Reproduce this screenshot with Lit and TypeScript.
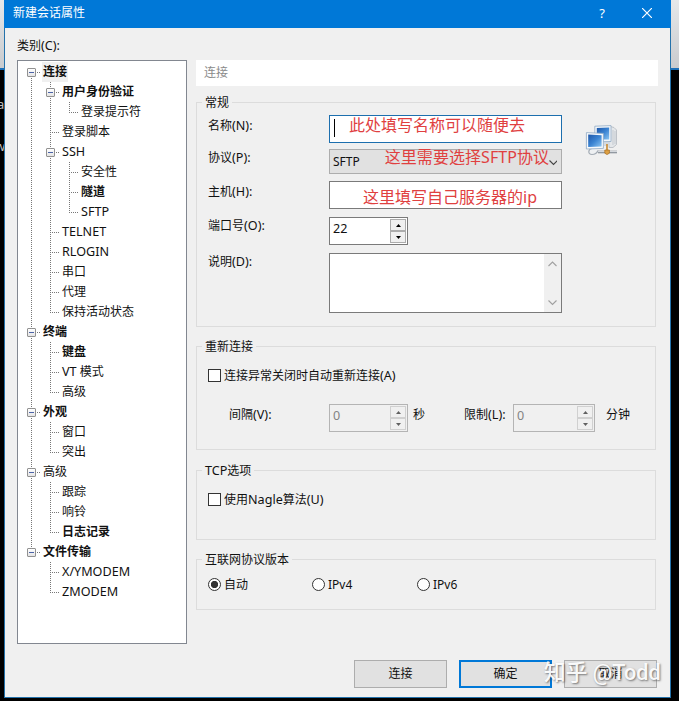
import { LitElement, html, css, svg, nothing } from "lit";
import { customElement, property } from "lit/decorators.js";
import { classMap } from "lit/directives/class-map.js";

interface TreeNode {
  label: string;
  bold?: boolean;
  selected?: boolean;
  children?: TreeNode[];
}

const CATEGORIES: TreeNode[] = [
  {
    label: "连接", bold: true, selected: true, children: [
      { label: "用户身份验证", bold: true, children: [{ label: "登录提示符" }] },
      { label: "登录脚本" },
      { label: "SSH", children: [{ label: "安全性" }, { label: "隧道", bold: true }, { label: "SFTP" }] },
      { label: "TELNET" },
      { label: "RLOGIN" },
      { label: "串口" },
      { label: "代理" },
      { label: "保持活动状态" },
    ],
  },
  { label: "终端", bold: true, children: [{ label: "键盘", bold: true }, { label: "VT 模式" }, { label: "高级" }] },
  { label: "外观", bold: true, children: [{ label: "窗口" }, { label: "突出" }] },
  { label: "高级", children: [{ label: "跟踪" }, { label: "响铃" }, { label: "日志记录", bold: true }] },
  { label: "文件传输", bold: true, children: [{ label: "X/YMODEM" }, { label: "ZMODEM" }] },
];

const base = css`
  * { box-sizing: border-box; }
  .latin { font-size: 12.6px; }
`;

/* Latin runs are set slightly larger than the 12px Chinese glyphs. */
const mix = (text: string) =>
  text.split(/([\x21-\x7e]+)/).map((part) => (/^[\x21-\x7e]/.test(part) ? html`<span class="latin">${part}</span>` : part));

@customElement("category-tree")
export class CategoryTree extends LitElement {
  static styles = [base, css`
    :host { display: block; width: 170px; height: 584px; border: 1px solid #828790; background: #fff; padding: 1px 0 0 4px; }
    .row { display: flex; height: 20px; line-height: 20px; white-space: pre; }
    .cell { width: 19px; flex: none; display: grid; grid-template: 10px 10px / 9px 10px; }
    .v { width: 1px; grid-column: 2; background: repeating-linear-gradient(#777 0 1px, transparent 1px 2px); }
    .top { grid-row: 1; }
    .bottom { grid-row: 2; }
    .h { grid-column: 2; grid-row: 2; height: 1px; background: repeating-linear-gradient(90deg, #777 0 1px, transparent 1px 2px); }
    .box { grid-area: 1 / 1 / 3 / 3; width: 9px; height: 9px; margin: 6px 0 0 5px; border: 1px solid #919191; border-radius: 1px; background: linear-gradient(#4b63a7, #4b63a7) center / 5px 1px no-repeat, linear-gradient(#fff, #e4e4e4); z-index: 1; }
    .label { padding: 0 1px 0 1px; margin-left: 1px; height: 20px; line-height: 20px; }
    .bold { font-weight: 700; }
    .selected { background: #f0f0f0; }
  `];

  private rows(nodes: TreeNode[], trail: boolean[] = []): unknown[] {
    return nodes.map((n, i) => {
      const last = i === nodes.length - 1;
      const first = trail.length === 0 && i === 0;
      return html`
        <div class="row">
          ${trail.map((more) => html`<span class="cell">${more ? html`<i class="v top"></i><i class="v bottom"></i>` : nothing}</span>`)}
          <span class="cell">
            ${first ? nothing : html`<i class="v top"></i>`}
            ${last ? nothing : html`<i class="v bottom"></i>`}
            <i class="h"></i>
            ${n.children ? html`<i class="box"></i>` : nothing}
          </span>
          <span class=${classMap({ label: true, bold: !!n.bold, selected: !!n.selected })}>${mix(n.label)}</span>
        </div>
        ${n.children ? this.rows(n.children, [...trail, !last]) : nothing}`;
    });
  }

  render() { return this.rows(CATEGORIES); }
}

@customElement("group-box")
export class GroupBox extends LitElement {
  @property() heading = "";
  static styles = [base, css`
    :host { display: block; box-sizing: border-box; border: 1px solid #dcdcdc; width: 460px; }
    .heading { display: block; width: max-content; height: 16px; line-height: 16px; margin: -8px 0 0 5px; padding: 0 3px; background: #f0f0f0; }
  `];
  render() { return html`<span class="heading">${mix(this.heading)}</span><slot></slot>`; }
}

@customElement("number-spinner")
export class NumberSpinner extends LitElement {
  @property() value = "";
  @property({ type: Boolean, reflect: true }) disabled = false;
  static styles = [base, css`
    :host { display: flex; box-sizing: border-box; width: 79px; height: 28px; border: 1px solid #7a7a7a; background: #fff; padding: 1px 1px 1px 3px; }
    :host([disabled]) { border-color: #b4b4b4; background: #f0f0f0; color: #838383; }
    .value { flex: 1; line-height: 20px; font-size: 12.6px; }
    .buttons { width: 16px; display: flex; flex-direction: column; }
    .button { flex: 1; border: 1px solid #acacac; background: #f0f0f0; display: grid; place-items: center; }
    :host([disabled]) .button { border-color: #d0d0d0; }
    svg { display: block; fill: #000; }
    :host([disabled]) svg { fill: #606060; }
  `];
  render() {
    return html`<span class="value">${this.value}</span>
      <span class="buttons">
        <span class="button"><svg width="5" height="3"><path d="M0 3 2.5 0 5 3Z"/></svg></span>
        <span class="button"><svg width="5" height="3"><path d="M0 0H5L2.5 3Z"/></svg></span>
      </span>`;
  }
}

const chevron = (d: string, color: string, w = 9, h = 6) =>
  html`<svg width=${w} height=${h} fill="none" stroke=${color} stroke-width="1.1">${svg`<path d=${d}/>`}</svg>`;

const networkIcon = html`
  <svg class="network" width="34" height="34" viewBox="0 0 34 34">
    <defs>
      <linearGradient id="screen" x1="0" y1="0" x2="1" y2="1">
        <stop offset="0" stop-color="#1f57a8"/><stop offset=".5" stop-color="#3a83d2"/><stop offset="1" stop-color="#8cc6f2"/>
      </linearGradient>
    </defs>
    <path d="M26.5 2.5 30 3.5 32.5 6V20.5L29 23.5H25Z" fill="#e4e7ea" stroke="#b3b8be" stroke-width=".8"/>
    <path d="M29 6V21M31 7V20" stroke="#b9bfc6" stroke-width=".7"/>
    <path d="M20 18H26V22H20Z" fill="#d5dadf"/>
    <path d="M10.8 2.2 27 1.6V17.5L10.8 17.8Z" fill="#f2f6fa" stroke="#8fa9c4" stroke-width=".8"/>
    <path d="M12.8 4 25.2 3.6V15.6H12.8Z" fill="url(#screen)"/>
    <path d="M8 24.5C4 25 3.5 30.5 8 30.5 11 30.5 13 29 14 26.5" fill="#eef0f2" stroke="#a4acb5" stroke-width="1.2"/>
    <path d="M2.4 8.6 19.4 9.4V24.4L2.4 25Z" fill="#f7f9fb" stroke="#8fa9c4" stroke-width=".8"/>
    <path d="M4.2 10.6 17.6 11.2V22.6L4.2 23Z" fill="url(#screen)"/>
    <path d="M14 28H33" stroke="#8a929a" stroke-width="2.6"/>
    <path d="M14 27.6H33" stroke="#dde1e5" stroke-width="1"/>
    <path d="M23 20V26" stroke="#c8892e" stroke-width="1.6"/>
    <path d="M20.8 26H25.4V29.2L23 30.6 20.8 29.2Z" fill="#dda043" stroke="#a86d1e" stroke-width=".7"/>
  </svg>`;

@customElement("app-root")
export class AppRoot extends LitElement {
  static styles = [base, css`
    :host { display: block; position: relative; width: 679px; height: 701px; overflow: hidden; box-sizing: border-box; padding-left: 4px;
      background: linear-gradient(#e6e8ea 0, #c9cbce 68px, #1b6fb8 68px, #1b6fb8 70px, #000 70px);
      font: 12px/16px "Noto Sans", "Noto Sans CJK SC", sans-serif; color: #111; }
    .behind { position: absolute; left: -3px; color: #bbb; font-size: 13px; }
    .one { top: 96px; }
    .two { top: 138px; left: -5px; }
    .dialog { position: relative; width: 667px; height: 698px; border: 1px solid #2472ab; border-top: 0; background: #f0f0f0; }
    .titlebar { height: 28px; margin: 0 -1px; background: #0078d7; color: #fff; display: flex; align-items: center; padding: 0 19px 3px 9px; }
    .title { flex: 1; }
    .help { font-size: 13px; margin-right: 37px; }
    .body { display: flex; flex-direction: column; padding: 10px 12px 0; }
    .caption { height: 22px; line-height: 16px; }
    .columns { display: flex; gap: 9px; }
    .panel { width: 462px; }
    .section { height: 26px; background: #fff; color: #8a8a8a; line-height: 25px; padding-left: 8px; }
    .general { height: 225px; margin-top: 16px; }
    .reconnect { height: 104px; margin-top: 19px; }
    .tcp { height: 70px; margin-top: 20px; }
    .ip { height: 51px; margin-top: 19px; }
    .form { display: grid; grid-template-columns: 121px 233px 1fr; grid-template-rows: 34px 32px 36px 36px 60px; padding: 4px 0 0 11px; }
    .lab { grid-column: 1; padding-top: 3px; }
    .lab.up { padding-top: 1px; }
    .field { grid-column: 2; border: 1px solid #7a7a7a; background: #fff; height: 28px; display: flex; }
    .focus { border-color: #1d6fae; }
    .caret { width: 1px; height: 18px; background: #000; margin: 3px 0 0 4px; }
    .note { color: #e0403f; font-size: 16px; line-height: 20px; white-space: nowrap; }
    .note.name { margin-left: 14px; margin-top: -1px; }
    .note.proto { margin-left: 25px; margin-top: -3px; flex: 1; letter-spacing: .05px; }
    .note.host { margin-left: 33px; margin-top: 5px; }
    .combo { height: 25px; background: #e1e1e1; border-color: #adadad; line-height: 23px; padding: 0 4px 0 3px; }
    .combo svg { margin-top: 10px; }
    .area { height: 60px; justify-content: flex-end; }
    .scroll { width: 17px; background: #f0f0f0; display: flex; flex-direction: column; justify-content: space-between; align-items: center; padding: 7px 0 6px; }
    .network { display: block; margin: 9px 0 0 22px; }
    .network-cell { grid-column: 3; grid-row: 1 / 3; }
    .check { display: flex; align-items: center; gap: 3px; height: 16px; padding-left: 11px; }
    .mark { width: 13px; height: 13px; border: 1px solid #333; background: #fff; margin-bottom: 2px; }
    .round { border-radius: 50%; }
    .on { background: radial-gradient(circle, #333 0 3.3px, #fff 4px); }
    .first { margin-top: 13px; }
    .nagle { margin-top: 13px; }
    .timing { display: flex; margin-top: 20px; padding-left: 32px; line-height: 22px; }
    .interval { width: 100px; }
    .seconds { width: 51px; margin-left: 5px; }
    .limit { width: 49px; }
    .wide { width: 82px; }
    .minutes { margin-left: 11px; }
    .radios { display: grid; grid-template-columns: 104px 105px 1fr; margin-top: 9px; }
    .actions { display: flex; justify-content: flex-end; gap: 12px; margin-top: 16px; padding-right: 1px; }
    .btn { width: 93px; height: 28px; border: 1px solid #adadad; background: #e1e1e1; line-height: 26px; text-align: center; }
    .primary { border: 2px solid #0078d7; line-height: 24px; }
    .watermark { position: absolute; left: 539px; top: 659px; font: 500 21.7px/28px Roboto, "Noto Sans CJK SC", sans-serif; white-space: pre; color: rgba(255,255,255,.95); text-shadow: 1px 1px 2px rgba(60,60,60,.65); }
  `];

  render() {
    return html`
      <span class="behind one">a</span><span class="behind two">w</span>
      <div class="dialog">
        <div class="titlebar">
          <span class="title">新建会话属性</span>
          <span class="help">?</span>
          <svg width="10" height="10" stroke="#fff" stroke-width="1.2"><path d="M0 0 10 10M10 0 0 10"/></svg>
        </div>
        <div class="body">
          <div class="caption">${mix("类别(C):")}</div>
          <div class="columns">
            <category-tree></category-tree>
            <div class="panel">
              <div class="section">连接</div>
              <group-box class="general" heading="常规">
                <div class="form">
                  <span class="lab">${mix("名称(N):")}</span>
                  <div class="field focus"><i class="caret"></i><span class="note name">此处填写名称可以随便去</span></div>
                  <span class="network-cell">${networkIcon}</span>
                  <span class="lab up">${mix("协议(P):")}</span>
                  <div class="field combo"><span>SFTP</span><span class="note proto">这里需要选择SFTP协议</span>${chevron("M.5 .5 4.5 4.5 8.5 .5", "#444")}</div>
                  <span class="lab">${mix("主机(H):")}</span>
                  <div class="field"><span class="note host">这里填写自己服务器的ip</span></div>
                  <span class="lab up">${mix("端口号(O):")}</span>
                  <number-spinner value="22"></number-spinner>
                  <span class="lab up">${mix("说明(D):")}</span>
                  <div class="field area"><span class="scroll">
                    ${chevron("M.5 5 4.5 1 8.5 5", "#a0a0a0")}${chevron("M.5 .5 4.5 4.5 8.5 .5", "#a0a0a0")}
                  </span></div>
                </div>
              </group-box>
              <group-box class="reconnect" heading="重新连接">
                <div class="check first"><i class="mark"></i><span>${mix("连接异常关闭时自动重新连接(A)")}</span></div>
                <div class="timing">
                  <span class="interval">${mix("间隔(V):")}</span>
                  <number-spinner value="0" disabled></number-spinner>
                  <span class="seconds">秒</span>
                  <span class="limit">${mix("限制(L):")}</span>
                  <number-spinner class="wide" value="0" disabled></number-spinner>
                  <span class="minutes">分钟</span>
                </div>
              </group-box>
              <group-box class="tcp" heading="TCP选项">
                <div class="check nagle"><i class="mark"></i><span>${mix("使用Nagle算法(U)")}</span></div>
              </group-box>
              <group-box class="ip" heading="互联网协议版本">
                <div class="radios">
                  <div class="check"><i class="mark round on"></i><span>自动</span></div>
                  <div class="check"><i class="mark round"></i><span>IPv4</span></div>
                  <div class="check"><i class="mark round"></i><span>IPv6</span></div>
                </div>
              </group-box>
            </div>
          </div>
          <div class="actions">
            <div class="btn">连接</div>
            <div class="btn primary">确定</div>
            <div class="btn">取消</div>
          </div>
        </div>
        <div class="watermark">知乎 @Todd</div>
      </div>`;
  }
}
